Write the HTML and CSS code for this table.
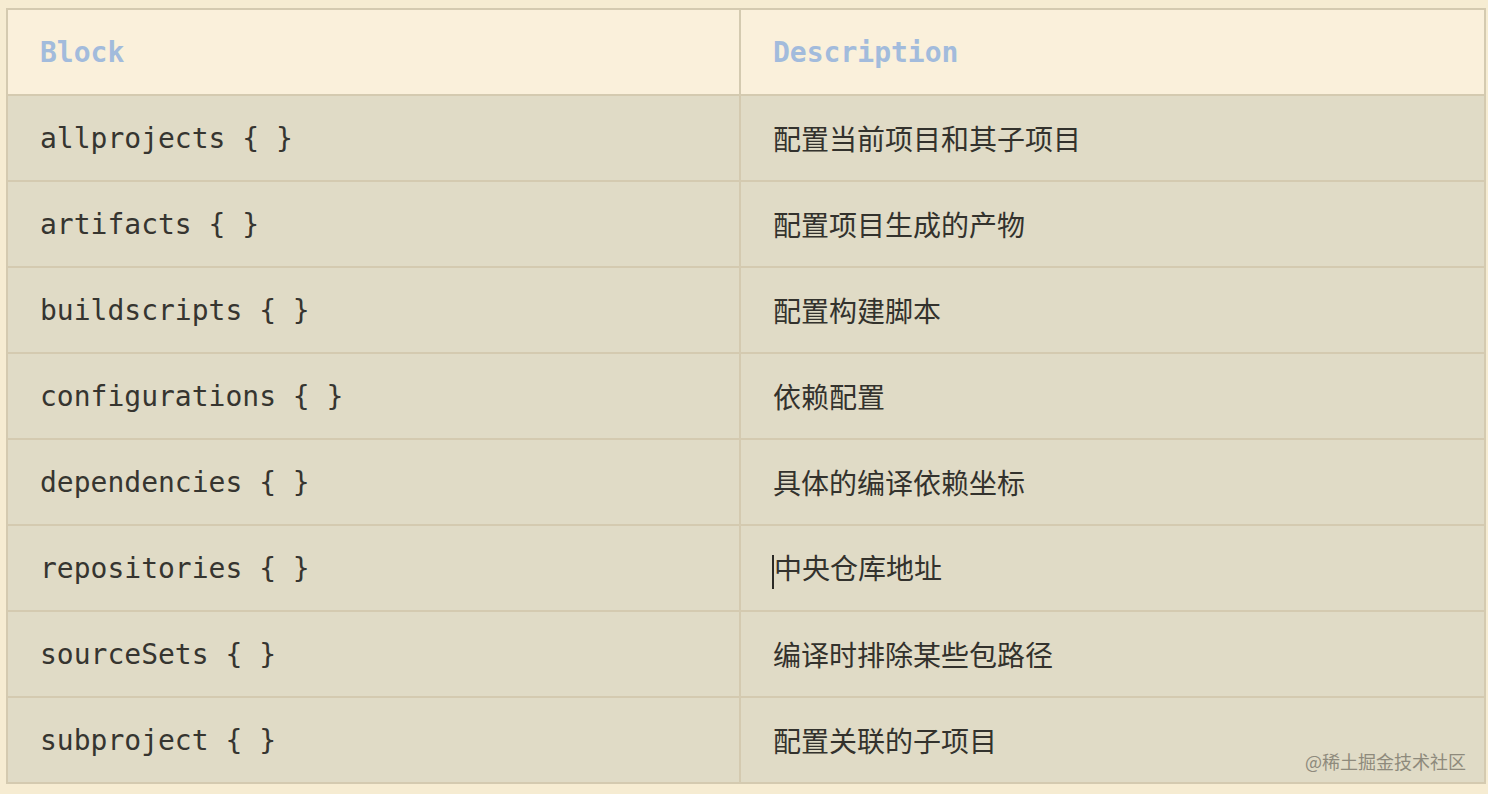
FILE: index.html
```html
<!DOCTYPE html>
<html lang="zh">
<head>
<meta charset="utf-8">
<link rel="stylesheet" href="styles.css">
</head>
<body>
<div class="wrap">
<table class="blocks">
  <thead>
    <tr><th class="c1">Block</th><th class="c2">Description</th></tr>
  </thead>
  <tbody>
    <tr><td>allprojects { }</td><td class="zh">配置当前项目和其子项目</td></tr>
    <tr><td>artifacts { }</td><td class="zh">配置项目生成的产物</td></tr>
    <tr><td>buildscripts { }</td><td class="zh">配置构建脚本</td></tr>
    <tr><td>configurations { }</td><td class="zh">依赖配置</td></tr>
    <tr><td>dependencies { }</td><td class="zh">具体的编译依赖坐标</td></tr>
    <tr><td>repositories { }</td><td class="zh"><span class="caret"></span>中央仓库地址</td></tr>
    <tr><td>sourceSets { }</td><td class="zh">编译时排除某些包路径</td></tr>
    <tr><td>subproject { }</td><td class="zh">配置关联的子项目</td></tr>
  </tbody>
</table>
<div class="watermark">@稀土掘金技术社区</div>
</div>
</body>
</html>
```
FILE: styles.css
```css
html, body {
  margin: 0;
  padding: 0;
  background: #f6ecd2;
}
body {
  width: 1488px;
  height: 794px;
  overflow: hidden;
}
.wrap {
  position: relative;
  padding: 8px 0 0 6px;
}
.blocks {
  border-collapse: collapse;
  width: 1480px;
  table-layout: fixed;
  font-family: "DejaVu Sans Mono", "Liberation Mono", monospace;
  font-size: 28px;
  color: #363530;
}
.blocks th, .blocks td {
  border: 2px solid #d4cab0;
  height: 84px;
  padding: 0 0 0 32px;
  text-align: left;
  vertical-align: middle;
  white-space: nowrap;
}
.blocks th.c1 { width: 699px; }
.blocks thead th {
  background: #faf0db;
  color: #a2bbdc;
  font-weight: bold;
}
.blocks tbody td {
  background: #e0dbc6;
}
.blocks td.zh {
  font-family: "Noto Sans CJK SC", "Noto Sans", sans-serif;
  font-size: 28px;
  color: #33322d;
}
.caret {
  display: inline-block;
  width: 2px;
  height: 34px;
  background: #2b2a26;
  vertical-align: middle;
  margin-left: -1px;
}
.watermark {
  position: absolute;
  right: 22px;
  top: 748px;
  font-family: "Noto Sans CJK SC", sans-serif;
  font-size: 18px;
  color: #8e8a7c;
}
```
